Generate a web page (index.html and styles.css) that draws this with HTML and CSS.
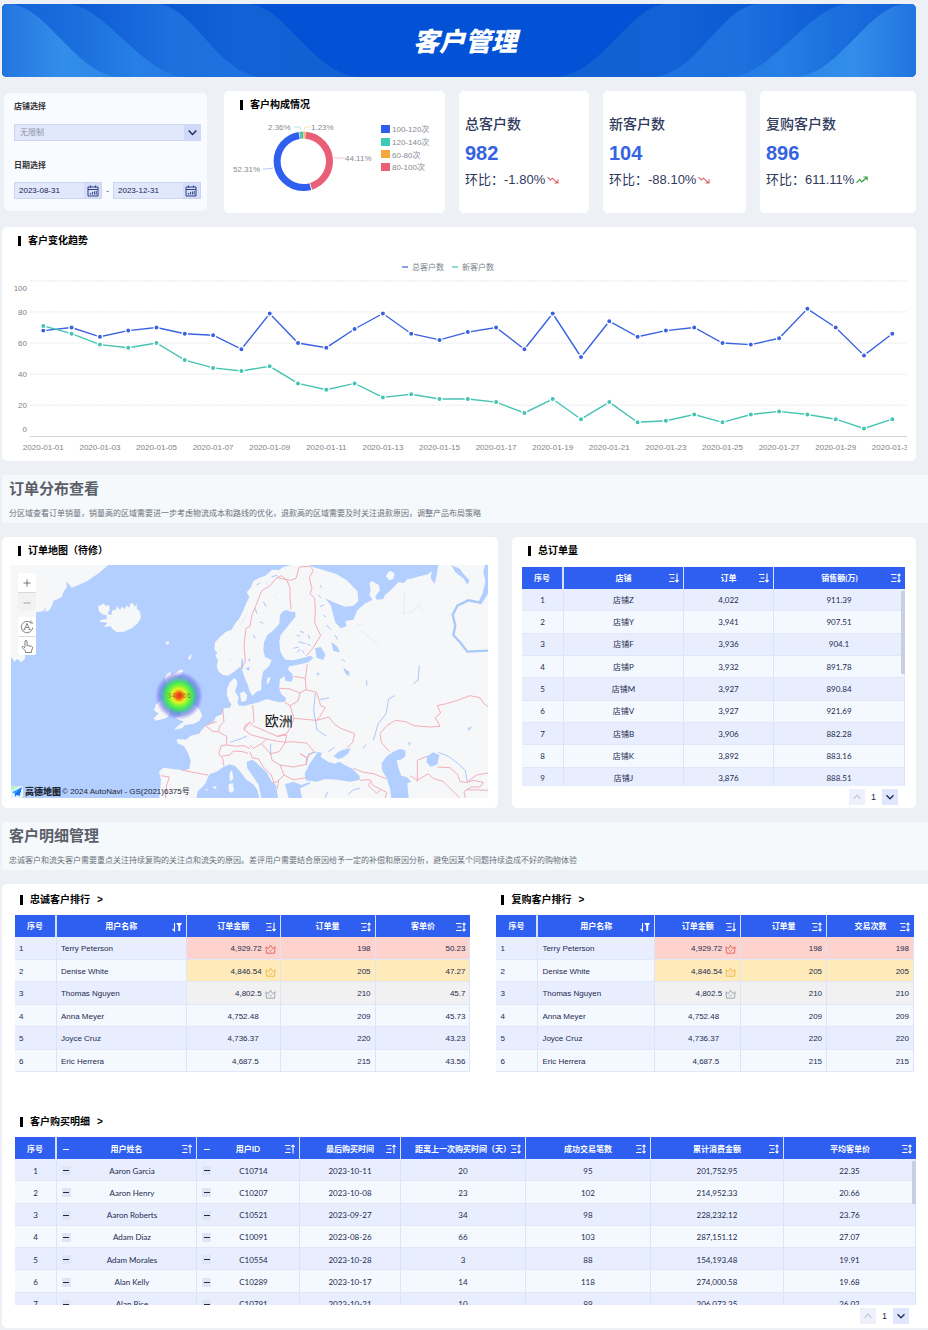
FILE: index.html
```html
<!DOCTYPE html>
<html lang="zh-CN">
<head>
<meta charset="utf-8">
<title>客户管理</title>
<meta name="viewport" content="width=device-width, initial-scale=1">
<link rel="stylesheet" href="styles.css">
</head>
<body>
<svg class="sprite" aria-hidden="true">
  <symbol id="i-desc" viewBox="0 0 10 10"><path d="M0 1.5h5.500M1.5 5h4M0 8.5h5.500M8 .5v8.600M6.300 7L8 9l1.700-2" fill="none" stroke="currentColor" stroke-width="1.1"/></symbol>
  <symbol id="i-asc" viewBox="0 0 10 10"><path d="M0 1.5h5.500M1.5 5h4M0 8.5h5.500M8 9.5V1M6.300 3L8 1l1.700 2" fill="none" stroke="currentColor" stroke-width="1.1"/></symbol>
  <symbol id="i-both" viewBox="0 0 10 10"><path d="M0 1.5h5.500M1.5 5h4M0 8.5h5.500M8 1v8M6.5 2.7L8 1l1.5 1.7M6.5 7.3L8 9l1.5-1.7" fill="none" stroke="currentColor" stroke-width="1.1"/></symbol>
  <symbol id="i-filter" viewBox="0 0 10 10"><path d="M2.5 1v8L.4 6.8" fill="none" stroke="currentColor" stroke-width="1.1"/><path d="M4.2 1H10L8.2 4v5H6.3V4z" fill="currentColor"/></symbol>
  <symbol id="i-crown" viewBox="0 0 11 10"><path d="M1.500 9.2h8l.6-6.400-2.500 1.900L5.5 1.200 3.400 4.700.9 2.800zM4.3 6l1.2 1.200L6.700 6" fill="none" stroke="currentColor" stroke-width=".9"/></symbol>
  <symbol id="i-down" viewBox="0 0 10 10"><path d="M1.5 3.2L5 6.8l3.5-3.6" fill="none" stroke="currentColor" stroke-width="1.3"/></symbol>
  <symbol id="i-up" viewBox="0 0 10 10"><path d="M1.5 6.8L5 3.2l3.5 3.6" fill="none" stroke="currentColor" stroke-width="1.2"/></symbol>
  <symbol id="i-cal" viewBox="0 0 12 12"><path d="M1 2h10v9H1zM1 4.5h10M3.5.5v2M8.5.5v2M3.4 9.6V8M5.4 9.6V7M7.4 9.6V6.4M9.2 9.6V6" fill="none" stroke="currentColor" stroke-width=".9"/></symbol>
  <symbol id="i-fall" viewBox="0 0 12 8"><path d="M.5 1.2L3.4 4l2-1.8L10.6 7M11 3.2V7H7.4" fill="none" stroke="currentColor" stroke-width="1.1"/></symbol>
  <symbol id="i-rise" viewBox="0 0 12 8"><path d="M.5 6.8L3.6 3.4l2.2 2.4L11 1.2M7.4 1h3.7v3.6" fill="none" stroke="currentColor" stroke-width="1.2"/></symbol>
</svg>

<header class="banner">
  <svg class="banner-art" viewBox="0 0 914 73" preserveAspectRatio="none" aria-hidden="true">
    <defs>
      <linearGradient id="b1" gradientUnits="userSpaceOnUse" x1="0" x2="118" y1="0" y2="0"><stop offset="0" stop-color="#2275df"/><stop offset=".5" stop-color="#338dea"/><stop offset="1" stop-color="#2d87e7"/></linearGradient>
      <linearGradient id="b2" gradientUnits="userSpaceOnUse" x1="20" x2="183" y1="0" y2="0"><stop offset="0" stop-color="#1464d9"/><stop offset=".35" stop-color="#1b6fdd"/><stop offset=".7" stop-color="#2780e5"/><stop offset="1" stop-color="#2378e1"/></linearGradient>
      <linearGradient id="b3" gradientUnits="userSpaceOnUse" x1="80" x2="260" y1="0" y2="0"><stop offset="0" stop-color="#0e5cd5"/><stop offset=".5" stop-color="#1d70de"/><stop offset="1" stop-color="#1e72df"/></linearGradient>
      <linearGradient id="b4" gradientUnits="userSpaceOnUse" x1="160" x2="358" y1="0" y2="0"><stop offset="0" stop-color="#0b58d3"/><stop offset=".4" stop-color="#1362d5"/><stop offset="1" stop-color="#1161d3"/></linearGradient>
      <g id="waves">
        <path fill="url(#b4)" d="M0 0H247C284 2 311 71 358 73H0z"/>
        <path fill="url(#b3)" d="M0 0H155C192 2 216 71 260 73H0z"/>
        <path fill="url(#b2)" d="M0 0H66C103 2 141 71 183 73H0z"/>
        <path fill="url(#b1)" d="M0 0H8C45 2 74 71 118 73H0z"/>
      </g>
    </defs>
    <rect width="914" height="73" fill="#0351d4"/>
    <use href="#waves"/>
    <use href="#waves" transform="translate(911 0) scale(-1 1)"/>
    <path fill="#2275df" d="M910 0h4v73h-4z"/>
  </svg>
  <h1>客户管理</h1>
</header>

<main>
  <section class="overview">
    <form class="card filters">
      <label class="flabel" for="shop">店铺选择</label>
      <div class="select"><select id="shop"><option>无限制</option></select><svg class="select-arrow"><use href="#i-down"/></svg></div>
      <label class="flabel second" for="from">日期选择</label>
      <div class="dates">
        <div class="date"><input id="from" type="text" value="2023-08-31"><button type="button" aria-label="开始日期"><svg><use href="#i-cal"/></svg></button></div>
        <span>-</span>
        <div class="date"><input type="text" value="2023-12-31" aria-label="结束日期"><button type="button" aria-label="选择结束日期"><svg><use href="#i-cal"/></svg></button></div>
      </div>
    </form>

    <article class="card">
      <h2 class="title">客户构成情况</h2>
      <svg class="chart" viewBox="224 119 221 92">
        <g fill="none" stroke-width="7" transform="rotate(-90 303.3 161.3)">
          <circle cx="303.3" cy="161.3" r="26.2" pathLength="100" stroke="#f6b042" stroke-dasharray="1 99"/>
          <circle cx="303.3" cy="161.3" r="26.2" pathLength="100" stroke="#ea5f78" stroke-dasharray="43.7 56.3" stroke-dashoffset="-1.4"/>
          <circle cx="303.3" cy="161.3" r="26.2" pathLength="100" stroke="#2f5fee" stroke-dasharray="51.8 48.2" stroke-dashoffset="-45.6"/>
          <circle cx="303.3" cy="161.3" r="26.2" pathLength="100" stroke="#41c9b8" stroke-dasharray="2 98" stroke-dashoffset="-97.8"/>
        </g>
        <g fill="none" stroke-width=".8">
          <path d="M294 127h5q2 0 2 3" stroke="#9bded6"/><path d="M311 127h-5q-2 0-2 3" stroke="#f8d9a5"/>
          <path d="M334 157.500l4 .5h7" stroke="#f2b5c0"/><path d="M263 169h4l6-1" stroke="#9fb2f2"/>
        </g>
        <g class="donut-text">
          <text x="268" y="130">2.36%</text><text x="311" y="130">1.23%</text><text x="345" y="161">44.11%</text><text x="233" y="172">52.31%</text>
          <text x="392" y="132">100-120次</text><text x="392" y="145">120-140次</text><text x="392" y="158">60-80次</text><text x="392" y="170">80-100次</text>
        </g>
        <rect x="381" y="125" width="9" height="8" fill="#2f5fee"/><rect x="381" y="138" width="9" height="8" fill="#41c9b8"/><rect x="381" y="150" width="9" height="8" fill="#f6a83c"/><rect x="381" y="163" width="9" height="8" fill="#ea5f78"/>
      </svg>
    </article>

    <article class="card kpi"><h3>总客户数</h3><strong>982</strong><p>环比：-1.80%<svg class="fall"><use href="#i-fall"/></svg></p></article>
    <article class="card kpi"><h3>新客户数</h3><strong>104</strong><p>环比：-88.10%<svg class="fall"><use href="#i-fall"/></svg></p></article>
    <article class="card kpi"><h3>复购客户数</h3><strong>896</strong><p>环比：611.11%<svg class="rise"><use href="#i-rise"/></svg></p></article>
  </section>

  <section class="card trend">
    <h2 class="title">客户变化趋势</h2>
    <svg class="chart" id="trend" viewBox="2 255 914 202"></svg>
  </section>

  <header class="section-head">
    <h2>订单分布查看</h2>
    <p>分区域查看订单销量，销量高的区域需要进一步考虑物流成本和路线的优化，退款高的区域需要及时关注退款原因，调整产品布局策略</p>
  </header>

  <section class="orders">
    <article class="card">
      <h2 class="title">订单地图（待修）</h2>
      <div class="map">
        <svg class="chart" viewBox="33 90 1431 699">
          <defs>
            <radialGradient id="heat"><stop offset="0" stop-color="#f52a10"/><stop offset=".12" stop-color="#fa5c14"/><stop offset=".28" stop-color="#e8f522"/><stop offset=".42" stop-color="#7cf53a"/><stop offset=".58" stop-color="#35e060" stop-opacity=".95"/><stop offset=".72" stop-color="#4a90c8" stop-opacity=".75"/><stop offset=".84" stop-color="#6a66e8" stop-opacity=".5"/><stop offset="1" stop-color="#8a80f0" stop-opacity="0"/></radialGradient>
          </defs>
          <rect x="33" y="90" width="1431" height="699" fill="#b3cfff"/>
          <g fill="#f6f7f8">
            <path d="M33 90H325L300 112 262 138 235 150 215 158 206 146 198 141 201 155 190 172 186 186 160 198 156 212 148 226 136 231 138 216 130 229 108 232V350L92 356 74 361 76 370 64 382 50 372 45 380 33 366z"/>
            <path d="M295 213L304 210 312 205 316 212 328 211 329 226 322 237 334 240 337 226 348 224 350 212 360 225 366 215 374 222 380 211 388 218 392 204 400 206 403 215 411 208 410 220 420 230 423 248 412 266 395 280 372 290 350 291 338 283 332 274 312 276 322 264 316 262 298 260 303 254 321 252 319 240 306 238 296 228z"/>
            <path d="M496 321l10-2 2 6-8 5zM564 370l6-10 5-2-2 12-5 6z"/>
            <path d="M500 418L510 411 515 420 525 415 545 402 549 408 542 418 528 428 562 432 560 445 548 458 560 470 575 490 580 508 592 516 602 530 606 542 598 558 580 567 555 570 545 580 521 584 540 568 552 560 526 550 544 540 538 525 520 514 522 500 510 480 512 466 500 450 494 430z"/>
            <path d="M468 508L480 498 490 490 505 500 512 520 508 540 498 550 468 557 460 550 476 536 462 526z"/>
            <path d="M875 90L850 96 838 105 815 104 796 122 775 130 760 138 752 158 740 172 748 186 738 206 730 226 718 250 705 266 695 284 678 290 664 302 645 322 643 345 652 352 646 362 654 376 650 392 655 408 668 420 684 422 705 408 720 396 728 408 734 428 742 446 750 472 758 482 770 470 784 465 784 440 789 410 808 392 815 376 795 366 790 345 792 322 802 300 818 288 838 266 840 240 850 228 862 225 872 230 886 230 886 246 866 270 850 290 842 300 838 318 840 345 846 360 856 374 880 376 905 370 932 362 940 370 925 382 900 388 878 392 868 394 864 404 876 416 880 428 874 440 856 438 854 424 840 432 838 450 838 462 844 478 858 488 855 500 840 502 822 498 800 492 776 502 752 508 735 512 718 512 712 502 716 486 705 470 712 448 710 434 702 430 690 442 682 458 680 478 686 496 694 508 690 518 672 520 666 538 648 545 640 560 620 570 604 586 598 596 572 602 558 614 530 612 532 624 552 634 564 654 572 676 568 702 548 706 520 702 490 698 477 710 483 735 478 789H590L592 770 615 748 628 718 650 710 668 697 690 688 706 694 722 712 740 735 760 748 772 765 778 789H784L776 750 758 722 742 700 740 680 758 674 776 690 800 712 814 738 828 750 834 789H1464V90H1315L1310 120 1304 146 1292 130 1295 108 1284 118 1250 126 1240 130 1222 133 1212 144 1195 142 1172 166 1155 180 1150 192 1130 194 1126 184 1140 166 1136 150 1116 138 1108 144 1112 166 1108 180 1118 194 1094 206 1072 226 1060 254 1036 258 1040 274 1022 280 1006 262 1000 240 992 210 975 190 1008 205 1036 215 1060 212 1075 198 1072 168 1040 136 1010 118 970 105 940 97 925 90z"/>
            <path d="M690 712l6-6 4 24-8 10-4-12zM686 748l12-4 4 20-6 10-10-6zM802 430l10-4-6 18-6 2zM720 475l12-6 10 12-4 16-14 4zM636 755l14-2-4 10zM616 762l8 0-4 6zM1164 112l10-4 10 8-4 16-12 4-10-12z"/>
          </g>
          <g fill="#b3cfff">
            <path d="M918 736L914 716 928 688 954 650 966 654 962 666 984 680 1004 686 1018 680 1034 690 1058 702 1078 722 1080 734 1050 740 1012 734 975 732 950 740z"/>
            <path d="M1000 664L1014 652 1026 645 1052 640 1044 656 1028 668 1015 672z"/>
            <path d="M1145 685L1160 664 1180 650 1200 642 1216 646 1216 664 1202 674 1190 676 1196 702 1204 722 1220 726 1234 740 1222 745 1226 789H1174L1170 760 1160 730 1146 704z"/>
            <path d="M1280 664L1300 652 1318 660 1312 688 1292 696 1280 682z"/>
            <path d="M855 748L880 740 904 750 930 740 930 746 900 760 906 789H866zM945 340L962 336 976 358 970 376 950 368zM994 322L1010 332 1020 352 1000 348zM1030 398l18 12 0 14-12-8zM950 412l10 4-8 6zM1354 90L1380 102 1390 116 1408 136 1402 150 1392 132 1366 112zM1455 90h9v86l-16 26-14 2 14-30 8-34-6-30zM1402 580l14-6-8 14zM1224 620l8 4-4 10z"/>
            <path d="M722 398l3-28 5 4-2 30zM736 400l14-4-4 12zM744 374l6-4 0 12z"/>
          </g>
          <g fill="none" stroke="#a9c8fa" stroke-width="7"><path d="M1446 204L1405 196 1372 212 1358 240 1366 272 1360 300 1382 324 1402 350 1464 347"/></g>
          <g fill="none" stroke="#a9c8fa" stroke-width="3">
            <path d="M1315 652L1345 664 1372 684 1396 706 1402 740M946 475l-5 50 10 60 28 18M960 494l28-6M1120 616l14-48 24-32 8-44 18-10M1090 640l8-12M1240 446l14-10 4-44M690 622l30-10 20-8M812 626v34M918 690l8-34 24-5M985 650l20-14M1045 778l15-14 20-4"/>
            <path d="M890 300l10 4M895 320l20 6M880 340l16-4M905 345l8 10M925 300l4 12M900 290l12 2M920 326l12 6M892 352l8-10M955 180l8 8M960 215l12-6M970 240l8 6M980 270l12 14M1005 300l8 14M960 150l4 8M800 110l14-4M770 150l10-6M815 125l16-4M790 200l8 14M765 220l6 16M780 260l10 6M760 300l6 10M1025 372l10 8M1100 436v16M975 790l8-20"/>
          </g>
          <g fill="none" stroke="#f0a3ae" stroke-width="2.600" stroke-linejoin="round">
            <path d="M724 402L736 380 732 330 738 280 750 274 756 240 770 205 785 168 812 150 830 128 845 122 862 138 870 160 870 188 873 224M830 128L850 132 872 136 888 130 898 96 930 94 940 106 928 128 936 160 930 176 944 190 946 224 944 262 962 302 938 340 920 362M922 388L916 430 882 424M916 430L918 464 900 474 870 462 838 460M918 464L950 472 962 512 976 518 960 544 950 556 882 550M900 474L894 498 870 512 855 502M870 512L882 550 874 572 860 596 832 604M832 604L800 590 758 572M758 510L762 560 750 572M950 556L986 546 1004 568 1022 580 1064 596 1058 622 1040 640M832 604L860 600 856 622 830 618 800 612 754 600 732 584 736 570 752 562M856 622L872 620 920 624 942 650 920 668 900 656 920 668 918 690M856 622L838 650 812 656 784 626 800 612M784 626L760 640 750 630M812 656L816 676 840 690 852 720 836 736 822 745 814 720 790 696 776 672 756 668 750 650M840 690L880 696 918 688M852 720L880 734 920 728M836 736L832 762M668 523L672 560 660 572 655 590 680 604 680 630 664 632 656 656 668 670 672 694M616 572L640 590 655 590M620 570L650 560M680 630L710 634 730 632 750 640M664 664L690 660 700 648 728 650 744 655M545 705L570 710 600 716 624 720M482 722L508 726 500 750 496 789M750 560L738 576 732 584"/>
            <path d="M1168 650L1144 622 1140 596 1160 572 1186 556 1216 560 1242 572 1290 576 1320 574 1306 548 1322 534 1312 512 1340 506 1372 496 1410 482 1440 488 1452 506 1464 514M1060 700L1090 712 1120 716 1160 732M1080 736L1110 734 1120 752 1160 772 1156 789M1110 740L1106 752 1130 775 1140 766M1252 740V676L1280 664M1252 736L1230 722M1252 736L1284 716 1300 730 1330 740 1352 762 1380 789M1312 696L1350 698 1374 720 1380 740 1400 742 1430 720 1464 714M1400 742L1420 736 1450 742 1440 756 1412 756 1392 770 1396 789M1400 764L1464 766"/>
          </g>
          <g fill="none" stroke="#dfe6f4" stroke-width="2"><path d="M1068 266l20 6M1084 286l24 22 28 20M1210 238l4-70M1212 236l30-8 14-22 16 30M820 180l10 14M800 140l8 20M740 240l-20 30M668 340l-10 4M700 380l-20-10"/></g>
          <circle cx="537" cy="482" r="73" fill="url(#heat)"/>
          <text class="map-count" x="537" y="490">34,766</text>
          <text class="map-region" x="836" y="574">欧洲</text>
        </svg>
        <div class="map-tools">
          <div class="tool-group">
            <button type="button" aria-label="放大"><svg viewBox="0 0 18 18"><path d="M5.500 9h7M9 5.500v7" fill="none" stroke="#666" stroke-width=".9"/></svg></button>
            <button type="button" aria-label="缩小" class="muted"><svg viewBox="0 0 18 18"><path d="M5.500 10h7" fill="none" stroke="#999" stroke-width=".9"/></svg></button>
          </div>
          <div class="tool-group">
            <button type="button" aria-label="重置"><svg viewBox="0 0 18 18" fill="none" stroke="#777" stroke-width=".9"><path d="M12.800 4.800A5.700 5.700 0 1 0 14.700 9.500M12.800 2.500v2.500h2.300M6.300 11.500L9 5.500l2.700 6M7.300 9.500h3.400M5.300 11.500h2M10.700 11.500h2"/></svg></button>
            <button type="button" aria-label="拖动"><svg viewBox="0 0 18 18" fill="none" stroke="#777" stroke-width=".9" stroke-linejoin="round"><path d="M7 10V4q1-1.500 2 0v4.500l4.600.8q1.200.4.900 1.700L13.500 14v1.500H7.500V14L4.300 10.700q-.4-1.600 1.200-1.200L7 11"/></svg></button>
          </div>
        </div>
        <div class="map-credit">
          <svg viewBox="0 0 12 12" aria-hidden="true"><rect width="12" height="12" rx="2" fill="#e8f5ff"/><path d="M0 0h8L0 5z" fill="#b9f2c4"/><path d="M11 1L.8 6.200l3 1.400z" fill="#2aa5ff"/><path d="M11 1L3.800 7.600l.5 3.400 1.500-2.300 2.700 1.500z" fill="#1473f0"/></svg>
          <b>高德地图</b><span>© 2024 AutoNavi - GS(2021)6375号</span>
        </div>
      </div>
    </article>

    <article class="card">
      <h2 class="title">总订单量</h2>
      <div class="order-wrap">
        <div class="scroll order-scroll"><div class="scroll-body"><table class="grid center geo order" id="t-order"></table></div><i class="thumb"></i></div>
        <nav class="pager"><button type="button" disabled aria-label="上一页"><svg><use href="#i-up"/></svg></button><span>1</span><button type="button" aria-label="下一页"><svg><use href="#i-down"/></svg></button></nav>
      </div>
    </article>
  </section>

  <header class="section-head">
    <h2>客户明细管理</h2>
    <p>忠诚客户和流失客户需要重点关注持续复购的关注点和流失的原因。差评用户需要结合原因给予一定的补偿和原因分析，避免因某个问题持续造成不好的购物体验</p>
  </header>

  <section class="card details">
    <div class="ranks">
      <article><h2 class="title near">忠诚客户排行<a href="#t-loyal">&gt;</a></h2><table class="grid rank" id="t-loyal"></table></article>
      <article><h2 class="title near">复购客户排行<a href="#t-repeat">&gt;</a></h2><table class="grid rank" id="t-repeat"></table></article>
    </div>
    <article class="purchases">
      <h2 class="title near">客户购买明细<a href="#t-buy">&gt;</a></h2>
      <div class="scroll buy-scroll"><div class="scroll-body"><table class="grid center geo buy" id="t-buy"></table></div><i class="thumb short"></i></div>
      <nav class="pager"><button type="button" disabled aria-label="上一页"><svg><use href="#i-up"/></svg></button><span>1</span><button type="button" aria-label="下一页"><svg><use href="#i-down"/></svg></button></nav>
    </article>
  </section>
</main>
<script src="app.js"></script>
</body>
</html>
```
FILE: styles.css
```css
* { box-sizing: border-box; }
body {
  margin: 0;
  padding: 4px 0 2px 2px;
  background: #edf1f5;
  color: #1d2b4f;
  font: 8px/12px "Liberation Sans", "Noto Sans CJK SC", sans-serif;
}
h1, h2, h3, p { margin: 0; }
button, input, select { font: inherit; color: inherit; border: 0; border-radius: 0; padding: 0; margin: 0; background: none; }
.sprite { display: none; }
.chart { display: block; width: 100%; height: auto; }

.banner {
  position: relative;
  display: flex;
  align-items: center;
  justify-content: center;
  height: 73px;
  margin-right: 12px;
  border-radius: 5px;
  overflow: hidden;
}
.banner-art { position: absolute; inset: 0; width: 100%; height: 100%; }
.banner h1 { position: relative; color: #fff; font: italic 900 26px/30px "Noto Sans CJK SC", sans-serif; padding: 0 0 2px 12px; }

main { display: flex; flex-direction: column; gap: 14px; margin-top: 14px; }
.card { background: #fff; border-radius: 5px; min-width: 0; }
.title {
  display: flex;
  align-items: center;
  gap: 7px;
  height: 28px;
  padding-left: 16px;
  color: #000;
  font-size: 10px;
  line-height: 14px;
}
.title::before { content: ""; width: 3px; height: 10px; background: #000; }
.title a { color: #000; text-decoration: none; }
.title.near { height: 30px; padding-left: 5px; }

.overview {
  display: grid;
  grid-template-columns: minmax(0, 208fr) minmax(0, 221fr) minmax(0, 130fr) minmax(0, 143fr) minmax(0, 156fr);
  gap: 14px;
  margin-right: 12px;
}
.filters { margin: 2px 3px 2px 2px; padding: 6px 6px 12px 10px; background: #f8fbff; }
.flabel { display: block; height: 16px; line-height: 16px; font-weight: 700; color: #333; }
.flabel.second { margin-top: 17px; }
.select { position: relative; margin-top: 9px; height: 17px; }
.select select { width: 100%; height: 100%; appearance: none; padding-left: 5px; background: #e2e8fc; border: 1px solid #cdd5f2; color: #8a91a8; }
.select-arrow { position: absolute; right: 0; top: 0; width: 17px; height: 17px; padding: 3px; background: #d0daf8; color: #1b2b5c; pointer-events: none; }
.dates { display: flex; align-items: center; justify-content: space-between; margin-top: 8px; }
.date { display: flex; flex: 0 1 88px; min-width: 0; height: 17px; background: #e2e8fc; border: 1px solid #cdd5f2; }
.date input { flex: 1; min-width: 0; padding-left: 4px; color: #14234d; }
.date button { width: 17px; background: #d5ddf9; color: #1f3478; display: grid; place-items: center; }
.date svg { width: 12px; height: 12px; }

.kpi { padding: 24px 6px 20px; color: #303a5c; }
.kpi h3 { font-size: 14px; line-height: 18px; font-weight: 500; }
.kpi strong { display: block; margin-top: 9px; color: #3563e2; font-size: 20px; line-height: 22px; }
.kpi p { margin-top: 7px; font-size: 13px; line-height: 18px; white-space: nowrap; }
.kpi svg { width: 12px; height: 8px; margin-left: 2px; }
.fall { color: #dc6464; }
.rise { color: #3ba043; }
.donut-text { fill: #868a92; font-size: 8px; }

.trend { margin-right: 12px; padding-bottom: 4px; }
.axis { fill: #7e8289; font-size: 8px; }
.axis .mid { text-anchor: middle; }
.axis .end { text-anchor: end; }

.section-head { padding: 4px 7px 3px; background: #f5f9fc; height: 48px; }
.section-head h2 { color: #5a5f69; font-size: 15px; line-height: 20px; font-weight: 700; }
.section-head p { margin-top: 9px; color: #6c717b; line-height: 12px; }

.orders { display: grid; grid-template-columns: minmax(0, 496fr) minmax(0, 404fr); gap: 14px; margin-right: 12px; }
.map { position: relative; margin: 0 10px 10px 9px; }
.map-region { font-size: 42px; text-anchor: middle; fill: #111; }
.map-count { font-size: 24px; text-anchor: middle; fill: #7a4a30; fill-opacity: .6; }
.map-tools { position: absolute; left: 7px; top: 8px; display: grid; gap: 6px; }
.tool-group { display: grid; width: 18px; background: #fff; border-radius: 2px; overflow: hidden; }
.tool-group button { display: block; width: 18px; height: 19px; }
.tool-group button + button { border-top: 1px solid #d8dade; }
.tool-group .muted { background: #f2f2f3; }
.tool-group svg { display: block; width: 18px; height: 18px; }
.map-credit { position: absolute; left: 0; bottom: 0; display: flex; align-items: center; height: 12px; color: #1d2633; white-space: nowrap; }
.map-credit svg { width: 12px; height: 12px; margin-right: 2px; }
.map-credit b { font-size: 9px; font-weight: 900; }
.map-credit span { margin-left: 1px; }

.order-wrap { margin: 2px 11px 0 10px; }
.scroll { position: relative; }
.scroll-body { height: 100%; overflow: auto; scrollbar-width: none; }
.order-scroll { height: 219px; }
.buy-scroll { height: 168px; }
.thumb { position: absolute; right: 0; top: 24px; width: 4px; height: 83px; background: #c9cfe3; border-radius: 1px; }
.thumb.short { height: 43px; }
.pager { display: flex; justify-content: flex-end; align-items: center; margin: 3px 7px 3px 0; font-size: 9px; }
.pager span { width: 17px; text-align: center; }
.pager button { display: grid; place-items: center; width: 16px; height: 16px; background: #e0e6fd; color: #1b2b5c; }
.pager button:disabled { background: #eef1fc; color: #c0c6dc; }
.pager svg { width: 10px; height: 10px; }

.grid { width: 100%; table-layout: fixed; border-collapse: separate; border-spacing: 0; }
.grid.geo { font-family: Lato, "Noto Sans CJK SC", sans-serif; }
.grid.rank { height: 157px; }
.grid.order { height: 223px; }
.grid.buy { height: 178px; }
.grid th { height: 22px; padding: 0; background: #2f5ff0; color: #fff; border-right: 1px solid #d6dffc; font-weight: 700; }
.grid th:last-child { border-right: 0; }
.grid th:first-child { border-right-width: 2px; }
.th { display: grid; grid-template-columns: 14px 1fr 14px; align-items: center; white-space: nowrap; text-align: center; }
.th svg { width: 10px; height: 10px; }
.th .fold { justify-self: end; }
.th-label { min-width: 0; display: flex; justify-content: center; }
.grid td { padding: 0 4px; line-height: 12px; border-right: 1px solid #dde4f7; border-bottom: 1px solid #e0e7f8; background: #f4f8ff; white-space: nowrap; }
.grid tr:nth-child(odd) td { background: #e9eefe; }
.grid.center td { text-align: center; }
.grid.rank th, .grid.buy th, .grid.buy td { padding-top: 2px; }
.grid.rank td { padding-top: 3px; }
.rank td:nth-child(n+3) { text-align: right; }
.grid.rank .value { padding-right: 21px; }
.rank .award { display: flex; align-items: center; justify-content: flex-end; gap: 3px; }
.rank .award svg { width: 11px; height: 10px; }
.rank tr.gold-1 td:nth-child(n+3) { background: #ffd3cd; }
.rank tr.gold-2 td:nth-child(n+3) { background: #ffebba; }
.rank tr.gold-3 td:nth-child(n+3) { background: #f1f1f2; }
.gold-1 svg { color: #e25c5c; }
.gold-2 svg { color: #efb445; }
.gold-3 svg { color: #9a9ea8; }
.folded { display: flex; align-items: center; padding-left: 1px; }
.folded span { flex: 1; margin-left: 1px; }
.fold { width: 9px; height: 9px; display: grid; place-items: center; }
.fold::before { content: ""; width: 6px; height: 1px; background: currentColor; }
td .fold { background: #e0e5f3; }

.details { padding: 1px 0 1px 13px; border-radius: 5px 0 0 5px; }
.ranks { display: grid; grid-template-columns: minmax(0, 456fr) minmax(0, 418fr); gap: 26px; margin-right: 14px; }
.purchases { margin-top: 35px; }
.purchases .scroll { margin-right: 12px; }
.purchases .pager { margin-right: 19px; }
```
FILE: app.js
```js
const icon = name => `<svg><use href="#i-${name}"/></svg>`;

function head(columns) {
  const total = columns.reduce((sum, c) => sum + c.w, 0);
  const cols = columns.map(c => `<col style="width:${(c.w / total * 100).toFixed(2)}%">`).join('');
  const cells = columns.map(c => `<th scope="col"><div class="th">${c.fold ? '<button type="button" class="fold" aria-label="折叠"></button>' : '<i></i>'}<span class="th-label">${c.label}</span>${c.icon ? icon(c.icon) : ''}</div></th>`).join('');
  return `<colgroup>${cols}</colgroup><thead><tr>${cells}</tr></thead>`;
}

function fill(id, columns, rows, cell, rowClass = () => '') {
  document.getElementById(id).innerHTML = head(columns) + '<tbody>' +
    rows.map((r, i) => `<tr class="${rowClass(i)}">${r.map((v, j) => cell(v, i, j)).join('')}</tr>`).join('') + '</tbody>';
}

const plain = v => `<td>${v}</td>`;

fill('t-order',
  [{ label: '序号', w: 42 }, { label: '店铺', w: 120, icon: 'desc' }, { label: '订单', w: 90, icon: 'desc' }, { label: '销售额(万)', w: 131, icon: 'both' }],
  [['Z', '4,022', '911.39'], ['Y', '3,941', '907.51'], ['F', '3,936', '904.1'], ['P', '3,932', '891.78'], ['M', '3,927', '890.84'],
   ['V', '3,927', '921.69'], ['B', '3,906', '882.28'], ['K', '3,892', '883.16'], ['J', '3,876', '888.51']]
    .map((r, i) => [i + 1, '店铺' + r[0], r[1], r[2]]), plain);

const people = [['Terry Peterson', '4,929.72', 198, '50.23'], ['Denise White', '4,846.54', 205, '47.27'], ['Thomas Nguyen', '4,802.5', 210, '45.7'],
  ['Anna Meyer', '4,752.48', 209, '45.73'], ['Joyce Cruz', '4,736.37', 220, '43.23'], ['Eric Herrera', '4,687.5', 215, '43.56']];
const rankCell = (v, i, j) => j !== 2 ? plain(v)
  : i < 3 ? `<td><div class="award">${v}${icon('crown')}</div></td>` : `<td class="value">${v}</td>`;
const medal = i => i < 3 ? `gold-${i + 1}` : '';
const rankHead = (w, last) => [{ label: '序号', w: w[0] }, { label: '用户名称', w: w[1], icon: 'filter' }, { label: '订单金额', w: w[2], icon: 'desc' },
  { label: '订单量', w: w[3], icon: 'both' }, { label: last, w: w[4], icon: 'both' }];
fill('t-loyal', rankHead([42, 130, 94, 95, 95], '客单价'), people.map((p, i) => [i + 1, ...p]), rankCell, medal);
fill('t-repeat', rankHead([42, 117, 86, 86, 87], '交易次数'), people.map((p, i) => [i + 1, p[0], p[1], p[2], p[2]]), rankCell, medal);

fill('t-buy',
  [{ label: '序号', w: 42 }, { label: '用户姓名', w: 140, icon: 'asc', fold: true }, { label: '用户ID', w: 103, icon: 'asc', fold: true },
   { label: '最后购买时间', w: 101, icon: 'asc' }, { label: '距离上一次购买时间（天）', w: 125, icon: 'both' }, { label: '成功交易笔数', w: 125, icon: 'both' },
   { label: '累计消费金额', w: 133, icon: 'both' }, { label: '平均客单价', w: 132, icon: 'both' }],
  [['Aaron Garcia', 'C10714', '2023-10-11', 20, 95, '201,752.95', '22.35'],
   ['Aaron Henry', 'C10207', '2023-10-08', 23, 102, '214,952.33', '20.66'],
   ['Aaron Roberts', 'C10521', '2023-09-27', 34, 98, '228,232.12', '23.76'],
   ['Adam Diaz', 'C10091', '2023-08-26', 66, 103, '287,151.12', '27.07'],
   ['Adam Morales', 'C10554', '2023-10-28', 3, 88, '154,193.48', '19.91'],
   ['Alan Kelly', 'C10289', '2023-10-17', 14, 118, '274,000.58', '19.68'],
   ['Alan Rice', 'C10791', '2023-10-21', 10, 89, '206,073.35', '26.02']].map((r, i) => [i + 1, ...r]),
  (v, i, j) => j === 1 || j === 2
    ? `<td><div class="folded"><button type="button" class="fold" aria-label="折叠"></button><span>${v}</span></div></td>` : plain(v));

const series = [
  ['#3a62e0', [68, 70, 64, 68, 70, 66, 65, 56, 79, 60, 57, 69, 79, 66, 62, 67, 70, 56, 79, 51, 74, 64, 68, 70, 60, 59, 63, 82, 70, 52, 66]],
  ['#45c4b2', [71, 66, 59, 57, 60, 49, 44, 42, 45, 34, 30, 34, 25, 27, 24, 24, 22, 15, 24, 11, 22, 9, 10, 14, 9, 14, 16, 14, 11, 5, 11]]
];
const px = i => +(43.3 + i * 28.3).toFixed(1);
const py = v => +(436.3 - v * 1.555).toFixed(1);
let out = '';
for (let v = 20; v <= 100; v += 20) out += `<path d="M30 ${py(v)}H907" stroke="#e6e8ec" stroke-dasharray="2 1"/>`;
out += '<path d="M30 436.500H907" stroke="#cfd2d6"/>';
for (const [color, data] of series) {
  out += `<polyline fill="none" stroke="${color}" stroke-width="1.400" points="${data.map((v, i) => px(i) + ',' + py(v)).join(' ')}"/>`;
  out += data.map((v, i) => `<circle cx="${px(i)}" cy="${py(v)}" r="2.600" fill="${color}" stroke="#fff" stroke-width="1.200"/>`).join('');
}
out += '<g class="axis">' + [[100, 291], [80, 315], [60, 346], [40, 377], [20, 408], [0, 432]].map(([v, y]) => `<text class="end" x="27" y="${y}">${v}</text>`).join('');
out += '<svg x="2" y="440" width="905" height="14" viewBox="2 440 905 14">';
for (let i = 0; i <= 30; i += 2) out += `<text class="mid" x="${px(i)}" y="450">2020-01-${String(i + 1).padStart(2, '0')}</text>`;
out += '</svg><path d="M402 267h6" stroke="#3a62e0" stroke-width="1.200"/><text x="412" y="270">总客户数</text><path d="M452 267h6" stroke="#45c4b2" stroke-width="1.200"/><text x="462" y="270">新客户数</text></g>';
document.getElementById('trend').innerHTML = out;
```
